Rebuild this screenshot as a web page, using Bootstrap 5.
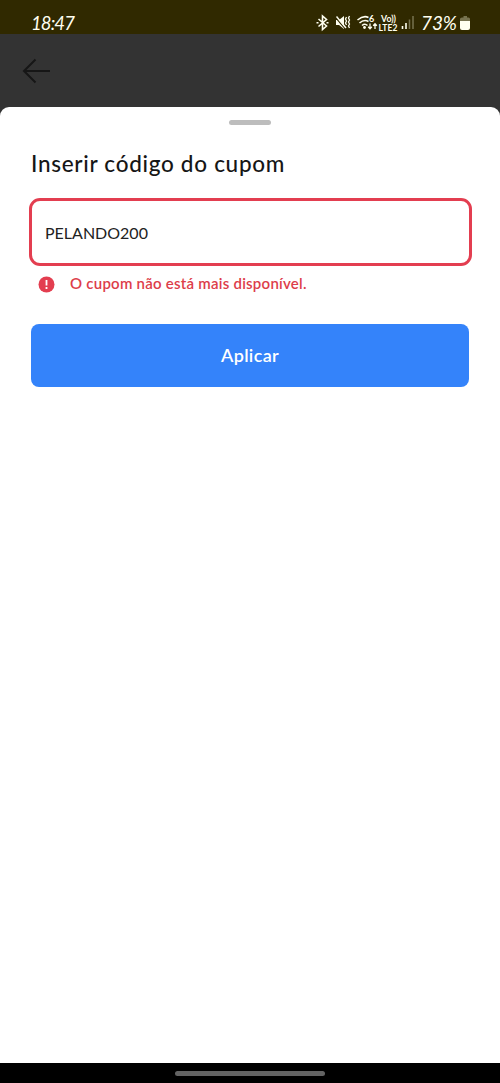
<!DOCTYPE html>
<html lang="pt-BR">
<head>
<meta charset="utf-8">
<meta name="viewport" content="width=device-width, initial-scale=1">
<title>Inserir código do cupom</title>
<link href="https://cdn.jsdelivr.net/npm/bootstrap@5.3.0/dist/css/bootstrap.min.css" rel="stylesheet">
<style>
body{font-family:Lato,"Open Sans",sans-serif;background:#333;color:#161616;height:1083px;overflow:hidden}
svg{display:block;flex:none}
.status{height:34px;background:#302900;color:#fffff0;padding:0 0 0 31px}
.clock{font-size:18.5px;font-style:italic;line-height:34px;letter-spacing:-.9px;padding-top:11px}
.status-icons{height:34px}
.topbar{height:73px;background:#333;padding-left:22px}
.sheet{background:#fff;border-radius:9px 9px 0 0;padding:13px 31px 0 29px}
.handle{width:42px;height:5px;background:#bdbdbd;margin-left:200px}
.heading{font-size:22.5px;font-weight:500;line-height:28px;margin:25px 0 20px 2px;white-space:nowrap;letter-spacing:.71px}
.coupon,.coupon:focus{height:68px;width:443px;border:3px solid #e33e50;border-radius:11px;padding:0 13px;font-size:16px;color:#222;box-shadow:none;background:#fff}
.alert-line{color:#dd3d4a;margin:8px 0 0 9px;height:20px;font-size:15px;font-weight:600;line-height:20px}
.message{letter-spacing:.24px;padding-left:15px;margin-top:-2px}
.apply{height:63px;width:438px;margin:30px 0 0 2px;background:#3483fa;border:0;border-radius:8px;font-size:18px;font-weight:600;color:#fff;letter-spacing:.35px}
.navbar-strip{height:20px;background:#000}
.pill{width:150px;height:5px;background:#636363}
</style>
</head>
<body class="d-flex flex-column">
<header class="status d-flex justify-content-between align-items-center">
  <span class="clock">18:47</span>
  <svg class="status-icons" width="186" height="34" viewBox="314 0 186 34" fill="none" stroke="#fffff0">
    <path d="M318.500 19l8 7-4 3.500V16l4 3.500-8 7M316.500 22.800h2M326.500 22.800h2" stroke-width="1.600"/>
    <path d="M336 20h3l5-4v13l-5-4h-3z" fill="#fffff0" stroke="none"/>
    <path d="M336 18l9 10.500" stroke="#302900" stroke-width="1.200"/><path d="M336.500 16.500l9.500 11.500" stroke-width="1.400"/>
    <path d="M346.500 17l-1 2 1 2-1 2 1 2M349.500 16l-1 2 1 2-1 2 1 2-1 2 1 2" stroke-width="1.300"/>
    <path d="M357.500 20q6-5 11-2.500M359.500 23q4.500-4 9-1.500M362 25.500q3-2.500 5.500 0" stroke-width="1.600"/><circle cx="364.500" cy="27.500" r="1.400" fill="#fffff0" stroke="none"/>
    <path d="M370 23.500v5M368.200 26.800l1.800 2 1.800-2M375 29v-5M373.200 25.800l1.800-2 1.800 2" stroke-width="1.300"/>
    <g fill="#fffff0" stroke="none" font-family="Lato,sans-serif">
      <text x="369" y="22" font-size="9" font-weight="700">6</text>
      <text x="381" y="22" font-size="8.500" font-weight="700" textLength="15" lengthAdjust="spacingAndGlyphs">Vo))</text>
      <text x="378.500" y="30.500" font-size="8.500" font-weight="700" textLength="19">LTE2</text>
      <text x="421" y="29.500" font-size="19" font-style="italic" textLength="36">73%</text>
    </g>
    <path d="M402.500 26v3M406 23v6" stroke-width="1.600"/><path d="M409.500 19.500v9.500M413 16v13" stroke="#77734f" stroke-width="1.500"/>
    <path d="M462 17.500h1.500V16h3.500v1.500h1.500q1.500 0 1.500 1.500v3h-10v-3q0-1.500 2-1.500z" fill="#77734f" stroke="none"/>
    <path d="M460 21h10v7q0 2-2 2h-6q-2 0-2-2z" fill="#fffff0" stroke="none"/>
  </svg>
</header>
<nav class="topbar d-flex align-items-center">
  <svg width="30" height="26" viewBox="0 0 30 26" fill="none" stroke="#161616" stroke-width="2"><path d="M28 13H2M13.500 1.500L2 13l11.500 11.500"/></svg>
</nav>
<main class="sheet flex-grow-1">
  <div class="handle rounded-pill"></div>
  <h1 class="heading">Inserir código do cupom</h1>
  <input class="form-control coupon" type="text" value="PELANDO200" aria-label="Código do cupom">
  <div class="alert-line d-flex align-items-center">
    <svg width="17" height="17" viewBox="0 0 17 17"><circle cx="8.500" cy="8.500" r="8" fill="#e33e50"/><path d="M8.500 4v5.500M8.500 11v2" stroke="#fff" stroke-width="1.800"/></svg>
    <span class="message">O cupom não está mais disponível.</span>
  </div>
  <button class="btn btn-primary apply" type="button">Aplicar</button>
</main>
<footer class="navbar-strip d-flex justify-content-center align-items-center"><div class="pill rounded-pill"></div></footer>
<script src="https://cdn.jsdelivr.net/npm/bootstrap@5.3.0/dist/js/bootstrap.bundle.min.js"></script>
</body>
</html>
